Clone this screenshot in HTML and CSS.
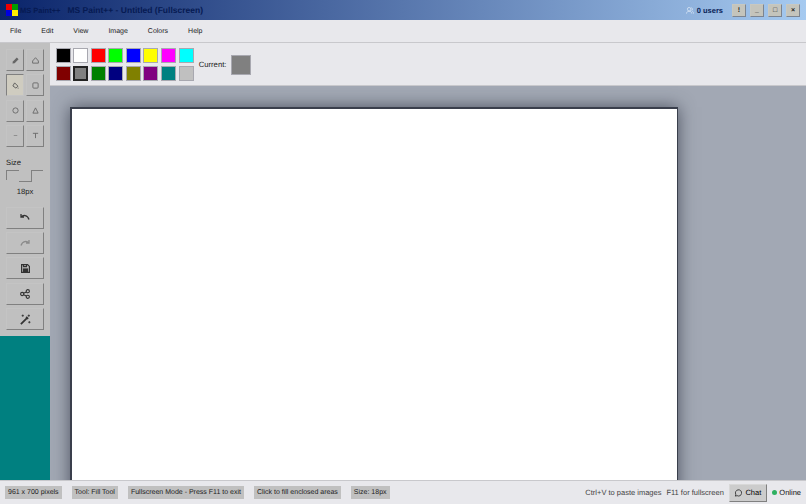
FILE: index.html
```html
<!DOCTYPE html>
<html>

<head>
    <meta charset="UTF-8">
    <title>MS Paint++</title>
    <link rel="stylesheet" href="styles.css">
</head>

<body>
    <header class="titleBar">
        <svg class="logo" width="12" height="12" viewBox="0 0 12 12">
            <rect x="0" y="0" width="6" height="6" fill="#f00000" />
            <rect x="6" y="0" width="6" height="6" fill="#00a000" />
            <rect x="0" y="6" width="6" height="6" fill="#0000e0" />
            <rect x="6" y="6" width="6" height="6" fill="#ffee00" />
        </svg>
        <span class="appName">MS Paint++</span>
        <span class="docName">MS Paint++ - Untitled (Fullscreen)</span>
        <span class="users">
            <svg width="8" height="7" viewBox="0 0 9 8" fill="none" stroke="#d4e2f4" stroke-width="1">
                <circle cx="3.500" cy="2.500" r="2" />
                <path d="M0.500 7.500c0-2 1.500-2.500 3-2.500s3 .5 3 2.500M6 .8c1.500 .2 1.800 2.800 .4 3.400M7 5c1 .3 1.500 1 1.500 2.500" />
            </svg>
            0 users
        </span>
        <button class="winBtn">!</button>
        <button class="winBtn">_</button>
        <button class="winBtn">&#9633;</button>
        <button class="winBtn">&times;</button>
    </header>

    <nav class="menuBar">
        <span class="menuItem">File</span>
        <span class="menuItem">Edit</span>
        <span class="menuItem">View</span>
        <span class="menuItem">Image</span>
        <span class="menuItem">Colors</span>
        <span class="menuItem">Help</span>
    </nav>

    <div class="middle">
        <div class="sideColumn">
            <aside class="toolBox">
                <div class="toolGrid">
                    <button class="toolBtn">
                        <svg width="7" height="7" viewBox="0 0 8 8" fill="#666"><path d="M0.500 7.500 1 5 5.500 .5 7.500 2.500 3 7z" /></svg>
                    </button>
                    <button class="toolBtn">
                        <svg width="7" height="7" viewBox="0 0 8 8" fill="none" stroke="#666"><path d="M4 .8 7.300 4.500V7H.7V4.500z" /></svg>
                    </button>
                    <button class="toolBtn selected">
                        <svg width="7" height="7" viewBox="0 0 8 8" fill="none" stroke="#555"><path d="M3 1 6.800 4.800 4.500 7 1 4.500z" /><path d="M7 6.500v1" /></svg>
                    </button>
                    <button class="toolBtn">
                        <svg width="7" height="7" viewBox="0 0 8 8" fill="none" stroke="#666"><rect x="1" y="1" width="6" height="6" rx="1" /></svg>
                    </button>
                    <button class="toolBtn">
                        <svg width="7" height="7" viewBox="0 0 8 8" fill="none" stroke="#666"><circle cx="4" cy="4" r="3" /></svg>
                    </button>
                    <button class="toolBtn">
                        <svg width="7" height="7" viewBox="0 0 8 8" fill="none" stroke="#666"><path d="M4 1 7 7H1z" /></svg>
                    </button>
                    <button class="toolBtn">
                        <svg width="7" height="7" viewBox="0 0 8 8" stroke="#888"><path d="M2 4h4" /></svg>
                    </button>
                    <button class="toolBtn">
                        <svg width="7" height="7" viewBox="0 0 8 8" fill="none" stroke="#666"><path d="M1 1.500h6M4 1.500V7" /></svg>
                    </button>
                </div>
                <div class="sizeLabel">Size</div>
                <div class="sizeRow">
                    <div class="sizeLeft"></div>
                    <div class="sizeThumb"></div>
                    <div class="sizeRight"></div>
                </div>
                <div class="sizeValue">18px</div>
                <div class="actions">
                    <button class="actionBtn">
                        <svg width="10" height="9" viewBox="0 0 10 9" fill="none" stroke="#333" stroke-width="1.300"><path d="M1 1v3h3M1.300 4C3 1.800 7.500 1.600 9 6.500" /></svg>
                    </button>
                    <button class="actionBtn">
                        <svg width="10" height="9" viewBox="0 0 10 9" fill="none" stroke="#8a8a8a" stroke-width="1.300"><path d="M9 1v3H6M8.700 4C7 1.800 2.500 1.600 1 6.500" /></svg>
                    </button>
                    <button class="actionBtn">
                        <svg width="9" height="9" viewBox="0 0 9 9" fill="none" stroke="#333" stroke-width="1.200"><path d="M.6.600h6l1.800 1.800v6H.6z" /><path d="M2.500 .6v2h3v-2" /><rect x="2.500" y="5" width="4" height="3.400" fill="#333" /></svg>
                    </button>
                    <button class="actionBtn">
                        <svg width="10" height="10" viewBox="0 0 10 10" fill="none" stroke="#333" stroke-width="1.100"><circle cx="2.200" cy="5" r="1.600" /><circle cx="7.800" cy="2.200" r="1.600" /><circle cx="7.800" cy="7.800" r="1.600" /><path d="M3.600 4.300 6.400 2.900M3.600 5.700 6.400 7.100" /></svg>
                    </button>
                    <button class="actionBtn">
                        <svg width="11" height="11" viewBox="0 0 10 10" fill="none" stroke="#333" stroke-width="1.100"><path d="M.8 9.200 6.500 3.500M5.600 2.600 7.400 4.400" stroke-width="1.600" /><path d="M8 .5v2M7 1.500h2M2.500 .5v2M1.500 1.500h2M8.500 6.500v2M7.500 7.500h2" stroke-width=".8" /></svg>
                    </button>
                </div>
            </aside>
            <div class="teal"></div>
        </div>

        <div class="rightColumn">
            <section class="paletteBar">
                <div class="palette">
                    <div class="swatch black"></div>
                    <div class="swatch white"></div>
                    <div class="swatch red"></div>
                    <div class="swatch lime"></div>
                    <div class="swatch blue"></div>
                    <div class="swatch yellow"></div>
                    <div class="swatch magenta"></div>
                    <div class="swatch cyan"></div>
                    <div class="swatch maroon"></div>
                    <div class="swatch gray active"></div>
                    <div class="swatch green"></div>
                    <div class="swatch navy"></div>
                    <div class="swatch olive"></div>
                    <div class="swatch purple"></div>
                    <div class="swatch teal2"></div>
                    <div class="swatch silver"></div>
                </div>
                <span class="currentLabel">Current:</span>
                <div class="currentColor"></div>
            </section>
            <main class="workspace">
                <div class="canvas"></div>
            </main>
        </div>
    </div>

    <footer class="statusBar">
        <span class="statusBox">961 x 700 pixels</span>
        <span class="statusBox">Tool: Fill Tool</span>
        <span class="statusBox">Fullscreen Mode - Press F11 to exit</span>
        <span class="statusBox">Click to fill enclosed areas</span>
        <span class="statusBox">Size: 18px</span>
        <span class="hint pushRight">Ctrl+V to paste images</span>
        <span class="hint">F11 for fullscreen</span>
        <button class="chatBtn">
            <svg width="8" height="8" viewBox="0 0 9 9" fill="none" stroke="#333"><path d="M1.500 8 2 6A3.500 3.500 0 1 1 3.500 7.500z" /></svg>
            Chat
        </button>
        <span class="online"><span class="dot"></span>Online</span>
    </footer>
</body>

</html>
```

FILE: styles.css
```css
html,
body {
    height: 100%;
}

body {
    margin: 0;
    display: flex;
    flex-direction: column;
    overflow: hidden;
    font-family: "Liberation Sans", Arial, sans-serif;
    font-size: 7px;
    text-rendering: geometricPrecision;
    color: #222;
    background: #c0c0c0;
}

button {
    font-family: inherit;
    text-rendering: geometricPrecision;
    padding: 0;
}

.titleBar {
    height: 20px;
    flex: none;
    display: flex;
    align-items: center;
    padding: 0 6px;
    background: linear-gradient(to right, #0a246a, #a6caf0);
}

.logo {
    flex: none;
}

.appName {
    margin-left: 2px;
    font-size: 7.500px;
    font-weight: bold;
    color: #061a52;
}

.docName {
    margin-left: 7px;
    font-size: 8.500px;
    font-weight: bold;
    color: #061a52;
}

.users {
    margin-left: auto;
    margin-right: 5px;
    display: flex;
    align-items: center;
    gap: 3px;
    font-size: 7.500px;
    font-weight: bold;
    color: #0a2458;
}

.winBtn {
    width: 14px;
    height: 13px;
    margin-left: 4px;
    font-size: 7px;
    line-height: 11px;
    font-weight: bold;
    color: #222;
    background: #c4c4bc;
    border: 1px solid;
    border-color: #c8c8c0 #7c8490 #7c8490 #c8c8c0;
}

.menuBar {
    height: 23px;
    flex: none;
    box-sizing: border-box;
    display: flex;
    align-items: center;
    padding: 1px 0 0 10px;
    gap: 20px;
    background: #e8e8ec;
    border-bottom: 1px solid #c8c8cc;
}

.middle {
    flex: 1;
    min-height: 0;
    display: flex;
}

.sideColumn {
    width: 50px;
    flex: none;
    display: flex;
    flex-direction: column;
}

.toolBox {
    height: 293px;
    flex: none;
    box-sizing: border-box;
    padding: 6px 5px 0 5px;
    background: #c0c0c0;
}

.toolGrid {
    display: grid;
    grid-template-columns: 18px 18px;
    grid-auto-rows: 22px;
    gap: 3.300px 2px;
    margin-left: 1px;
}

.toolBtn {
    display: flex;
    align-items: center;
    justify-content: center;
    background: #c0c0c0;
    border: 1px solid;
    border-color: #c4c4c4 #808080 #808080 #c4c4c4;
}

.toolBtn.selected {
    background: #cfccc0;
    border-color: #808080 #c4c4c4 #c4c4c4 #808080;
}

.sizeLabel {
    margin: 11px 0 0 1px;
    font-size: 7.700px;
}

.sizeRow {
    display: flex;
    height: 12px;
    margin: 3px 0 0 1px;
}

.sizeLeft {
    width: 13px;
    height: 10px;
    box-sizing: border-box;
    border-top: 1px solid #808080;
    border-left: 1px solid #808080;
}

.sizeThumb {
    width: 13px;
    height: 12px;
    box-sizing: border-box;
    border-right: 1px solid #808080;
    border-bottom: 1px solid #808080;
}

.sizeRight {
    width: 11px;
    height: 10px;
    box-sizing: border-box;
    border-top: 1px solid #808080;
}

.sizeValue {
    margin-top: 5px;
    text-align: center;
    font-size: 7.700px;
}

.actions {
    display: flex;
    flex-direction: column;
    gap: 3.300px;
    margin: 11px 0 0 1px;
}

.actionBtn {
    width: 38px;
    height: 22px;
    display: flex;
    align-items: center;
    justify-content: center;
    background: #c0c0c0;
    border: 1px solid;
    border-color: #c4c4c4 #808080 #808080 #c4c4c4;
}

.teal {
    flex: 1;
    background: #008080;
}

.rightColumn {
    flex: 1;
    min-width: 0;
    display: flex;
    flex-direction: column;
}

.paletteBar {
    height: 43px;
    flex: none;
    box-sizing: border-box;
    display: flex;
    align-items: center;
    padding: 1px 0 0 5.500px;
    background: #e8e8ec;
    border-bottom: 1px solid #c8c8cc;
}

.palette {
    display: grid;
    grid-template-columns: repeat(8, 15px);
    grid-auto-rows: 15px;
    gap: 3px 2.600px;
}

.swatch {
    box-sizing: border-box;
    border: 1px solid #a8a8b0;
}

.swatch.active {
    border: 2px solid #222;
}

.black { background: #000; }
.white { background: #fff; }
.red { background: #f00; }
.lime { background: #0f0; }
.blue { background: #00f; }
.yellow { background: #ff0; }
.magenta { background: #f0f; }
.cyan { background: #0ff; }
.maroon { background: #800000; }
.gray { background: #808080; }
.green { background: #008000; }
.navy { background: #000080; }
.olive { background: #808000; }
.purple { background: #800080; }
.teal2 { background: #008080; }
.silver { background: #c0c0c0; }

.currentLabel {
    margin-left: 5px;
    font-size: 7.700px;
}

.currentColor {
    width: 20px;
    height: 20px;
    margin-left: 5px;
    box-sizing: border-box;
    background: #808080;
    border: 1px solid #a8a8b0;
}

.workspace {
    flex: 1;
    min-height: 0;
    overflow: hidden;
    padding: 21px 0 0 20px;
    background: #a2a8b4;
}

.canvas {
    width: 608px;
    height: 500px;
    box-sizing: border-box;
    background: #fff;
    border: 2px solid #3a3f4c;
    border-right-width: 1px;
    box-shadow: 0 0 16px rgba(40, 45, 60, 0.7);
}

.statusBar {
    height: 24px;
    flex: none;
    position: relative;
    box-sizing: border-box;
    display: flex;
    align-items: center;
    padding: 0 5px;
    gap: 10px;
    background: #e8e8ec;
    border-top: 1px solid #c8c8cc;
}

.statusBox {
    padding: 2px 3px;
    line-height: 9px;
    background: #c0c0c0;
}

.hint {
    font-size: 7.500px;
    color: #444;
    margin-right: -5px;
}

.pushRight {
    margin-left: auto;
}

.chatBtn {
    height: 18px;
    width: 38px;
    display: flex;
    align-items: center;
    justify-content: center;
    gap: 3px;
    font-size: 7.500px;
    background: #cccccc;
    border: 1px solid;
    border-color: #d8d8d8 #808080 #808080 #d8d8d8;
}

.online {
    display: flex;
    align-items: center;
    gap: 2.500px;
    margin-left: -5px;
    font-size: 7.500px;
    color: #111;
}

.dot {
    width: 5px;
    height: 5px;
    border-radius: 50%;
    background: #2eb060;
}
```
